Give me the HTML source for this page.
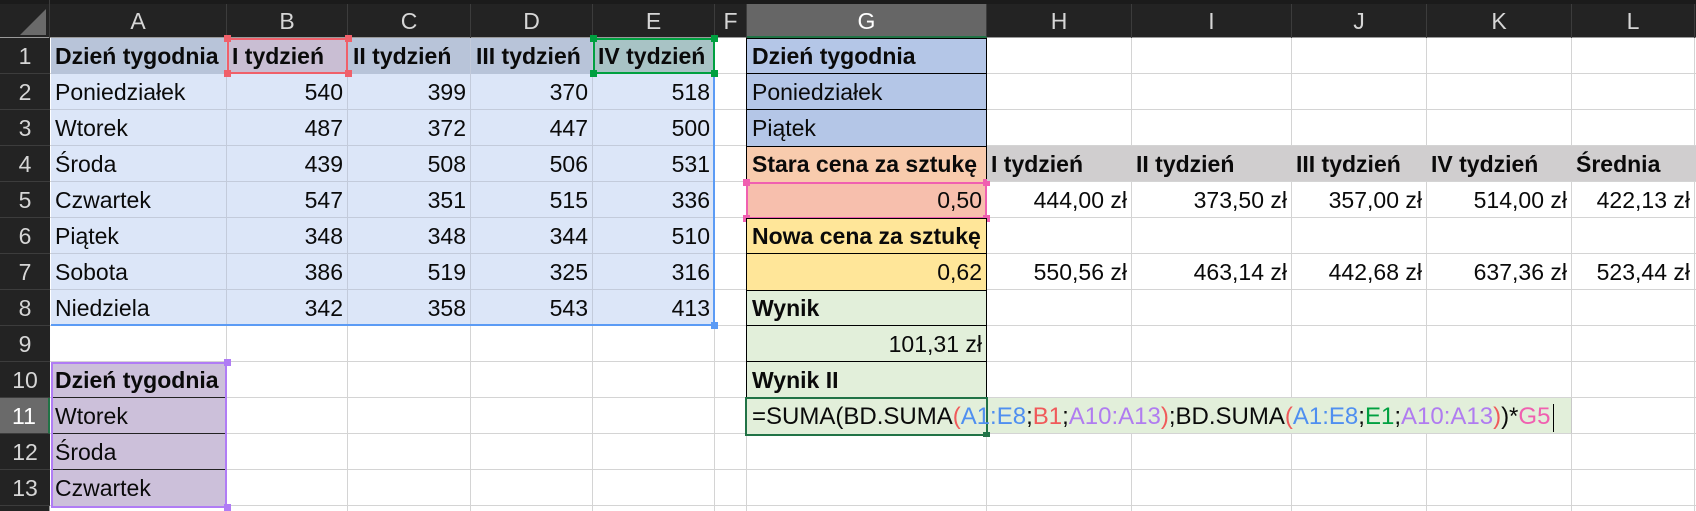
<!DOCTYPE html>
<html><head><meta charset="utf-8"><style>
html,body{margin:0;padding:0}
body{width:1696px;height:511px;position:relative;overflow:hidden;background:#fff;font-family:"Liberation Sans",sans-serif;font-size:23px;color:#0a0a0a}
.a{position:absolute;box-sizing:border-box}
.c{position:absolute;box-sizing:border-box;line-height:37px;padding:0 5px;white-space:nowrap;overflow:visible}
.r{text-align:right}
.b{font-weight:bold}
.hd{position:absolute;top:4px;height:34px;line-height:34px;text-align:center;color:#d6d6d6;font-size:23px;border-right:1px solid #3c3c3c;box-sizing:border-box}
.rh{position:absolute;left:0;width:50px;height:36px;line-height:36px;text-align:center;color:#d6d6d6;font-size:23px;border-bottom:1px solid #3c3c3c;box-sizing:border-box;background:#232323}
.h{position:absolute;width:7px;height:7px}
</style></head><body>
<div class="a" style="left:50px;top:38px;width:1646px;height:473px;background:
repeating-linear-gradient(to bottom,transparent 0,transparent 35px,#d4d4d4 35px,#d4d4d4 36px);"></div>
<div class="a" style="left:226px;top:38px;width:1px;height:473px;background:#d4d4d4"></div>
<div class="a" style="left:347px;top:38px;width:1px;height:473px;background:#d4d4d4"></div>
<div class="a" style="left:470px;top:38px;width:1px;height:473px;background:#d4d4d4"></div>
<div class="a" style="left:592px;top:38px;width:1px;height:473px;background:#d4d4d4"></div>
<div class="a" style="left:714px;top:38px;width:1px;height:473px;background:#d4d4d4"></div>
<div class="a" style="left:746px;top:38px;width:1px;height:473px;background:#d4d4d4"></div>
<div class="a" style="left:986px;top:38px;width:1px;height:473px;background:#d4d4d4"></div>
<div class="a" style="left:1131px;top:38px;width:1px;height:473px;background:#d4d4d4"></div>
<div class="a" style="left:1291px;top:38px;width:1px;height:473px;background:#d4d4d4"></div>
<div class="a" style="left:1426px;top:38px;width:1px;height:473px;background:#d4d4d4"></div>
<div class="a" style="left:1571px;top:38px;width:1px;height:473px;background:#d4d4d4"></div>
<div class="a" style="left:1694px;top:38px;width:1px;height:473px;background:#d4d4d4"></div>

<div class="a" style="left:0;top:0;width:1696px;height:38px;background:#232323;border-bottom:1px solid #9a9a9a"></div>
<div class="a" style="left:0;top:0;width:1696px;height:4px;background:#1b1b1b"></div>
<div class="a" style="left:0;top:0;width:50px;height:38px;border-right:1px solid #3c3c3c"></div>
<div class="a" style="left:20px;top:9px;width:0;height:0;border-left:26px solid transparent;border-bottom:26px solid #6a6a6a"></div>
<div class="hd" style="left:50px;width:177px">A</div>
<div class="hd" style="left:227px;width:121px">B</div>
<div class="hd" style="left:348px;width:123px">C</div>
<div class="hd" style="left:471px;width:122px">D</div>
<div class="hd" style="left:593px;width:122px">E</div>
<div class="hd" style="left:715px;width:32px">F</div>
<div class="hd" style="left:747px;width:240px;background:#666;color:#fff;border-bottom:2px solid #217346;height:34px">G</div>
<div class="hd" style="left:987px;width:145px">H</div>
<div class="hd" style="left:1132px;width:160px">I</div>
<div class="hd" style="left:1292px;width:135px">J</div>
<div class="hd" style="left:1427px;width:145px">K</div>
<div class="hd" style="left:1572px;width:123px">L</div>

<div class="a" style="left:0;top:38px;width:50px;height:473px;background:#232323;border-right:1px solid #9a9a9a"></div>
<div class="rh" style="top:38px">1</div><div class="rh" style="top:74px">2</div><div class="rh" style="top:110px">3</div>
<div class="rh" style="top:146px">4</div><div class="rh" style="top:182px">5</div><div class="rh" style="top:218px">6</div>
<div class="rh" style="top:254px">7</div><div class="rh" style="top:290px">8</div><div class="rh" style="top:326px">9</div>
<div class="rh" style="top:362px">10</div><div class="rh" style="top:398px;background:#6a6a6a;color:#fff;border-right:2px solid #217346">11</div>
<div class="rh" style="top:434px">12</div><div class="rh" style="top:470px">13</div>

<div class="a" style="left:51px;top:38px;width:664px;height:36px;background:#b8c4d9"></div>
<div class="a" style="left:51px;top:74px;width:664px;height:252px;background:#dce6f8;
background-image:repeating-linear-gradient(to bottom,transparent 0,transparent 35px,#c3cbdb 35px,#c3cbdb 36px)"></div>
<div class="a" style="left:226px;top:38px;width:1px;height:288px;background:#c3cbdb"></div>
<div class="a" style="left:347px;top:38px;width:1px;height:288px;background:#c3cbdb"></div>
<div class="a" style="left:470px;top:38px;width:1px;height:288px;background:#c3cbdb"></div>
<div class="a" style="left:592px;top:38px;width:1px;height:288px;background:#c3cbdb"></div>
<div class="a" style="left:227px;top:38px;width:121px;height:36px;background:#c9bed3;border:2px solid #f0606a"></div>
<div class="a" style="left:593px;top:38px;width:122px;height:36px;background:#a8c3c5;border:2px solid #00a040"></div>
<div class="a" style="left:713px;top:74px;width:2px;height:252px;background:#5b9bf5"></div>
<div class="a" style="left:51px;top:324px;width:664px;height:2px;background:#5b9bf5"></div>
<div class="h" style="left:711px;top:322px;background:#5b9bf5"></div>
<div class="h" style="left:224px;top:35px;background:#f0606a"></div><div class="h" style="left:345px;top:35px;background:#f0606a"></div>
<div class="h" style="left:224px;top:70px;background:#f0606a"></div><div class="h" style="left:345px;top:70px;background:#f0606a"></div>
<div class="h" style="left:590px;top:35px;background:#00a040"></div><div class="h" style="left:711px;top:35px;background:#00a040"></div>
<div class="h" style="left:590px;top:70px;background:#00a040"></div><div class="h" style="left:711px;top:70px;background:#00a040"></div>

<div class="c b" style="left:50px;top:38px">Dzień tygodnia</div>
<div class="c b" style="left:227px;top:38px">I tydzień</div>
<div class="c b" style="left:348px;top:38px">II tydzień</div>
<div class="c b" style="left:471px;top:38px">III tydzień</div>
<div class="c b" style="left:593px;top:38px">IV tydzień</div>

<div class="c" style="left:50px;top:74px">Poniedziałek</div>
<div class="c" style="left:50px;top:110px">Wtorek</div>
<div class="c" style="left:50px;top:146px">Środa</div>
<div class="c" style="left:50px;top:182px">Czwartek</div>
<div class="c" style="left:50px;top:218px">Piątek</div>
<div class="c" style="left:50px;top:254px">Sobota</div>
<div class="c" style="left:50px;top:290px">Niedziela</div>

<div class="c r" style="left:227px;width:121px;top:74px">540</div><div class="c r" style="left:348px;width:123px;top:74px">399</div><div class="c r" style="left:471px;width:122px;top:74px">370</div><div class="c r" style="left:593px;width:122px;top:74px">518</div>
<div class="c r" style="left:227px;width:121px;top:110px">487</div><div class="c r" style="left:348px;width:123px;top:110px">372</div><div class="c r" style="left:471px;width:122px;top:110px">447</div><div class="c r" style="left:593px;width:122px;top:110px">500</div>
<div class="c r" style="left:227px;width:121px;top:146px">439</div><div class="c r" style="left:348px;width:123px;top:146px">508</div><div class="c r" style="left:471px;width:122px;top:146px">506</div><div class="c r" style="left:593px;width:122px;top:146px">531</div>
<div class="c r" style="left:227px;width:121px;top:182px">547</div><div class="c r" style="left:348px;width:123px;top:182px">351</div><div class="c r" style="left:471px;width:122px;top:182px">515</div><div class="c r" style="left:593px;width:122px;top:182px">336</div>
<div class="c r" style="left:227px;width:121px;top:218px">348</div><div class="c r" style="left:348px;width:123px;top:218px">348</div><div class="c r" style="left:471px;width:122px;top:218px">344</div><div class="c r" style="left:593px;width:122px;top:218px">510</div>
<div class="c r" style="left:227px;width:121px;top:254px">386</div><div class="c r" style="left:348px;width:123px;top:254px">519</div><div class="c r" style="left:471px;width:122px;top:254px">325</div><div class="c r" style="left:593px;width:122px;top:254px">316</div>
<div class="c r" style="left:227px;width:121px;top:290px">342</div><div class="c r" style="left:348px;width:123px;top:290px">358</div><div class="c r" style="left:471px;width:122px;top:290px">543</div><div class="c r" style="left:593px;width:122px;top:290px">413</div>

<div class="a" style="left:51px;top:362px;width:176px;height:146px;background:#ccc0da;border:2px solid #b07cf5"></div>
<div class="a" style="left:53px;top:397px;width:172px;height:1px;background:#222"></div>
<div class="a" style="left:53px;top:433px;width:172px;height:1px;background:#222"></div>
<div class="a" style="left:53px;top:469px;width:172px;height:1px;background:#222"></div>
<div class="h" style="left:224px;top:359px;background:#b07cf5"></div><div class="h" style="left:224px;top:504px;background:#b07cf5"></div>
<div class="c b" style="left:50px;top:362px">Dzień tygodnia</div>
<div class="c" style="left:50px;top:398px">Wtorek</div>
<div class="c" style="left:50px;top:434px">Środa</div>
<div class="c" style="left:50px;top:470px">Czwartek</div>

<div class="a" style="left:746px;top:38px;width:241px;height:109px;background:#b4c6e7;border:1px solid #000"></div>
<div class="a" style="left:746px;top:73px;width:241px;height:1px;background:#000"></div>
<div class="a" style="left:746px;top:109px;width:241px;height:1px;background:#000"></div>
<div class="a" style="left:746px;top:146px;width:241px;height:37px;background:#f8cbad;border:1px solid #000"></div>
<div class="a" style="left:746px;top:182px;width:241px;height:37px;background:#f7bfad;border:2px solid #f060b0"></div>
<div class="h" style="left:743px;top:179px;background:#f060b0"></div><div class="h" style="left:983px;top:179px;background:#f060b0"></div>
<div class="h" style="left:743px;top:215px;background:#f060b0"></div><div class="h" style="left:983px;top:215px;background:#f060b0"></div>
<div class="a" style="left:746px;top:218px;width:241px;height:73px;background:#ffe699;border:1px solid #000"></div>
<div class="a" style="left:746px;top:253px;width:241px;height:1px;background:#000"></div>
<div class="a" style="left:746px;top:290px;width:241px;height:109px;background:#e2efda;border:1px solid #000"></div>
<div class="a" style="left:746px;top:325px;width:241px;height:1px;background:#000"></div>
<div class="a" style="left:746px;top:361px;width:241px;height:1px;background:#000"></div>
<div class="c b" style="left:747px;top:38px">Dzień tygodnia</div>
<div class="c" style="left:747px;top:74px">Poniedziałek</div>
<div class="c" style="left:747px;top:110px">Piątek</div>
<div class="c b" style="left:747px;top:146px">Stara cena za sztukę</div>
<div class="c r" style="left:747px;width:240px;top:182px">0,50</div>
<div class="c b" style="left:747px;top:218px">Nowa cena za sztukę</div>
<div class="c r" style="left:747px;width:240px;top:254px">0,62</div>
<div class="c b" style="left:747px;top:290px">Wynik</div>
<div class="c r" style="left:747px;width:240px;top:326px">101,31 zł</div>
<div class="c b" style="left:747px;top:362px">Wynik II</div>

<div class="a" style="left:987px;top:146px;width:709px;height:35px;background:#d0cecf"></div>
<div class="c b" style="left:986px;top:146px">I tydzień</div>
<div class="c b" style="left:1131px;top:146px">II tydzień</div>
<div class="c b" style="left:1291px;top:146px">III tydzień</div>
<div class="c b" style="left:1426px;top:146px">IV tydzień</div>
<div class="c b" style="left:1571px;top:146px">Średnia</div>
<div class="c r" style="left:987px;width:145px;top:182px">444,00 zł</div>
<div class="c r" style="left:1132px;width:160px;top:182px">373,50 zł</div>
<div class="c r" style="left:1292px;width:135px;top:182px">357,00 zł</div>
<div class="c r" style="left:1427px;width:145px;top:182px">514,00 zł</div>
<div class="c r" style="left:1572px;width:123px;top:182px">422,13 zł</div>
<div class="c r" style="left:987px;width:145px;top:254px">550,56 zł</div>
<div class="c r" style="left:1132px;width:160px;top:254px">463,14 zł</div>
<div class="c r" style="left:1292px;width:135px;top:254px">442,68 zł</div>
<div class="c r" style="left:1427px;width:145px;top:254px">637,36 zł</div>
<div class="c r" style="left:1572px;width:123px;top:254px">523,44 zł</div>

<div class="a" style="left:986px;top:398px;width:586px;height:36px;background:#e2efda;border-right:1px solid #c8c8c8;border-bottom:1px solid #d4d4d4"></div>
<div class="a" style="left:745px;top:397px;width:243px;height:39px;border:2px solid #217346"></div>
<div class="a" style="left:747px;top:399px;width:239px;height:35px;background:#e2efda"></div>
<div class="h" style="left:983px;top:432px;background:#217346;height:5px"></div>
<div class="c" style="left:747px;top:398px;font-size:24px">=SUMA(BD.SUMA<span style="color:#f05a5a">(</span><span style="color:#4f8ff0">A1:E8</span>;<span style="color:#f05a5a">B1</span>;<span style="color:#b07cf0">A10:A13</span><span style="color:#f05a5a">)</span>;BD.SUMA<span style="color:#f05a5a">(</span><span style="color:#4f8ff0">A1:E8</span>;<span style="color:#00a040">E1</span>;<span style="color:#b07cf0">A10:A13</span><span style="color:#f05a5a">)</span>)*<span style="color:#f060b0">G5</span><span style="display:inline-block;width:1px;height:28px;background:#000;vertical-align:middle;margin-left:3px"></span></div>
</body></html>
